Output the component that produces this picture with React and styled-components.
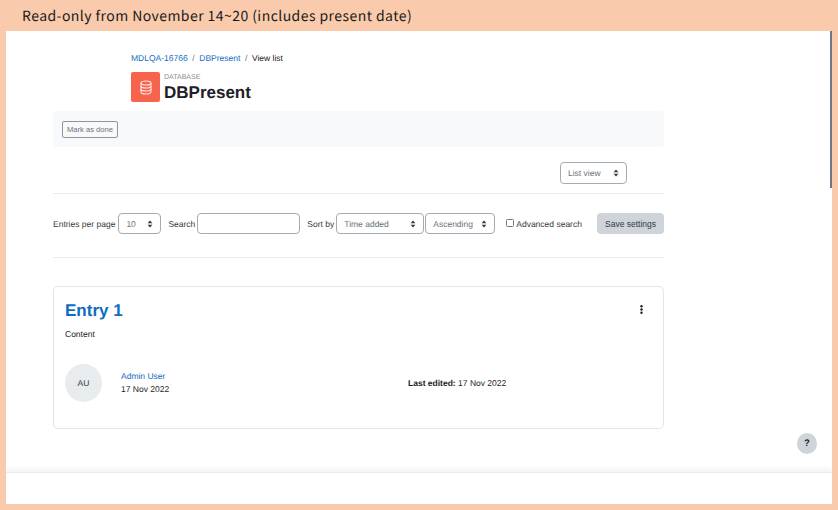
import React from "react"
import styled, { createGlobalStyle } from "styled-components"

const GlobalStyle = createGlobalStyle`
  html, body {
    margin: 0;
    height: 100%;
    overflow: hidden;
    background: #f9cbac;
  }

  * {
    box-sizing: border-box;
  }
`

const Page = styled.div`
  width: 838px;
  height: 510px;
  display: flex;
  flex-direction: column;
  padding: 0 6px 6px;
  background: #f9cbac;
  font-family: "Liberation Sans", Arial, sans-serif;
  font-size: 8.5px;
  color: #1d2125;
  text-rendering: geometricPrecision;
`

const Banner = styled.div`
  height: 31px;
  flex: none;
  padding: 7px 0 0 16px;
  font-family: "Noto Sans CJK JP", sans-serif;
  font-size: 14px;
  line-height: 18px;
  letter-spacing: 0.44px;
  color: #1a1a1a;
`

const Frame = styled.div`
  position: relative;
  flex: 1;
  display: flex;
  flex-direction: column;
  background: #fff;
  overflow: hidden;
`

const Scrollbar = styled.div`
  position: absolute;
  top: 0;
  right: 0;
  width: 2px;
  height: 157px;
  background: #6f7880;
`

const Main = styled.main`
  flex: 1;
  width: 658px;
  padding: 20px 0 0 47px;
`

const Footer = styled.footer`
  height: 32px;
  flex: none;
  background: #fff;
  border-top: 1px solid #e9eaec;
  box-shadow: 0 -3px 5px rgba(0, 0, 0, 0.05);
`

const Breadcrumb = styled.nav`
  display: flex;
  align-items: center;
  gap: 4.6px;
  height: 14px;
  margin-left: 78px;
  line-height: 14px;
`

const Link = styled.a`
  color: #0f6cbf;
`

const Slash = styled.span`
  color: #6a737b;
`

const Heading = styled.header`
  display: flex;
  gap: 4px;
  height: 30px;
  margin: 7px 0 9px 78px;
`

const ActivityIcon = styled.div`
  width: 29px;
  height: 30px;
  display: flex;
  align-items: center;
  justify-content: center;
  background: #f7634d;
  border-radius: 2px;
`

const HeadingText = styled.div`
  display: flex;
  flex-direction: column;
  padding-top: 2px;
`

const Eyebrow = styled.span`
  font-size: 7px;
  line-height: 8px;
  color: #868e96;
`

const Title = styled.h1`
  margin: 0;
  font-size: 17px;
  line-height: 21px;
  font-weight: 700;
`

const CompletionBar = styled.div`
  height: 36px;
  display: flex;
  align-items: center;
  padding-left: 9px;
  background: #f8f9fa;
  border-radius: 4px;
`

const OutlineButton = styled.button`
  width: 56px;
  height: 17px;
  padding: 0;
  background: transparent;
  border: 1px solid #8f959e;
  border-radius: 2px;
  font: inherit;
  font-size: 7.6px;
  color: #6a737b;
`

const ViewRow = styled.div`
  height: 47px;
  display: flex;
  justify-content: flex-end;
  padding: 15px 37px 0 0;
  border-bottom: 1px solid #e9ecef;
`

const FilterRow = styled.form`
  height: 64px;
  display: flex;
  align-items: center;
  padding-bottom: 4px;
  border-bottom: 1px solid #e9ecef;
`

const Label = styled.label`
  margin-right: ${props => props.$gap || 3}px;
  margin-left: ${props => props.$before || 0}px;
  white-space: nowrap;
  color: #343a40;
`

const SelectBox = styled.div`
  width: ${props => props.$width}px;
  height: ${props => props.$height}px;
  flex: none;
  display: flex;
  align-items: center;
  justify-content: space-between;
  margin-right: ${props => props.$gap || 0}px;
  padding: 0 7px;
  background: #fff;
  border: 1px solid #a6abb2;
  border-radius: 4px;
  color: #6a737b;
`

const SearchInput = styled.input`
  width: 103px;
  height: 21px;
  flex: none;
  padding: 0 7px;
  background: #fff;
  border: 1px solid #a6abb2;
  border-radius: 4px;
`

const Check = styled.input`
  appearance: none;
  width: 8px;
  height: 8px;
  flex: none;
  margin: 0 2px 2px 11px;
  background: #fff;
  border: 1px solid #767676;
  border-radius: 1.5px;
`

const SaveButton = styled.button`
  width: 67px;
  height: 21px;
  flex: none;
  margin-left: auto;
  padding: 0;
  background: #ced4da;
  border: 0;
  border-radius: 4px;
  font: inherit;
  color: #343a40;
`

const EntryCard = styled.article`
  position: relative;
  height: 143px;
  margin-top: 28px;
  padding: 13px 11px 0;
  border: 1px solid #e3e5e8;
  border-radius: 5px;
`

const EntryTitle = styled.h2`
  margin: 0;
  font-size: 17px;
  line-height: 21px;
  font-weight: 700;
  color: #0f6cbf;
`

const EntryBody = styled.p`
  margin: 6px 0 0;
  line-height: 14px;
`

const KebabButton = styled.span`
  position: absolute;
  top: 18px;
  right: 20px;
  display: flex;
`

const MetaRow = styled.div`
  display: flex;
  align-items: center;
  margin-top: 23px;
`

const Avatar = styled.div`
  width: 37px;
  height: 38px;
  flex: none;
  display: flex;
  align-items: center;
  justify-content: center;
  background: #e9ecef;
  border-radius: 50%;
  color: #343a40;
`

const Author = styled.div`
  width: 306px;
  flex: none;
  display: flex;
  flex-direction: column;
  padding-left: 19px;
  line-height: 13px;
`

const HelpButton = styled.div`
  position: absolute;
  top: 402px;
  left: 791px;
  width: 20px;
  height: 21px;
  display: flex;
  align-items: center;
  justify-content: center;
  background: #ced4da;
  border-radius: 50%;
  font-size: 9.5px;
  font-weight: 700;
  color: #1d2125;
`

const Arrows = () => (
  <svg width="6" height="8" viewBox="0 0 6 8" fill="#343a40">
    <path d="M3 0.6 L5.4 3.2 H0.6 Z" />
    <path d="M3 7.4 L5.4 4.8 H0.6 Z" />
  </svg>
)

const Select = ({ value, width, height = 21, gap }) => (
  <SelectBox $width={width} $height={height} $gap={gap}>
    <span>{value}</span>
    <Arrows />
  </SelectBox>
)

const DatabaseIcon = () => (
  <svg width="14" height="15" viewBox="0 0 14 15" fill="none" stroke="#fff" strokeWidth="1.1" opacity="0.85">
    <ellipse cx="7" cy="3" rx="5" ry="2" />
    <path d="M2 3 V12 C2 13.1 4.2 14 7 14 C9.8 14 12 13.1 12 12 V3" />
    <path d="M2 6 C2 7.1 4.2 8 7 8 C9.8 8 12 7.1 12 6" />
    <path d="M2 9 C2 10.1 4.2 11 7 11 C9.8 11 12 10.1 12 9" />
  </svg>
)

const KebabIcon = () => (
  <svg width="3" height="9" viewBox="0 0 3 9" fill="#1d2125">
    <circle cx="1.5" cy="1.3" r="1.2" />
    <circle cx="1.5" cy="4.5" r="1.2" />
    <circle cx="1.5" cy="7.7" r="1.2" />
  </svg>
)

const App = () => (
  <Page>
    <GlobalStyle />
    <Banner>Read-only from November 14~20 (includes present date)</Banner>
    <Frame>
      <Main>
        <Breadcrumb>
          <Link>MDLQA-16766</Link>
          <Slash>/</Slash>
          <Link>DBPresent</Link>
          <Slash>/</Slash>
          <span>View list</span>
        </Breadcrumb>
        <Heading>
          <ActivityIcon>
            <DatabaseIcon />
          </ActivityIcon>
          <HeadingText>
            <Eyebrow>DATABASE</Eyebrow>
            <Title>DBPresent</Title>
          </HeadingText>
        </Heading>
        <CompletionBar>
          <OutlineButton type="button">Mark as done</OutlineButton>
        </CompletionBar>
        <ViewRow>
          <Select value="List view" width={67} height={22} />
        </ViewRow>
        <FilterRow>
          <Label>Entries per page</Label>
          <Select value="10" width={43} />
          <Label $before={7} $gap={2}>Search</Label>
          <SearchInput />
          <Label $before={7} $gap={2}>Sort by</Label>
          <Select value="Time added" width={88} gap={1} />
          <Select value="Ascending" width={70} />
          <Check type="checkbox" />
          <Label $gap={0}>Advanced search</Label>
          <SaveButton type="button">Save settings</SaveButton>
        </FilterRow>
        <EntryCard>
          <EntryTitle>Entry 1</EntryTitle>
          <KebabButton>
            <KebabIcon />
          </KebabButton>
          <EntryBody>Content</EntryBody>
          <MetaRow>
            <Avatar>AU</Avatar>
            <Author>
              <Link>Admin User</Link>
              <span>17 Nov 2022</span>
            </Author>
            <span>
              <strong>Last edited:</strong> 17 Nov 2022
            </span>
          </MetaRow>
        </EntryCard>
      </Main>
      <Footer />
      <Scrollbar />
      <HelpButton>?</HelpButton>
    </Frame>
  </Page>
)

export default App
